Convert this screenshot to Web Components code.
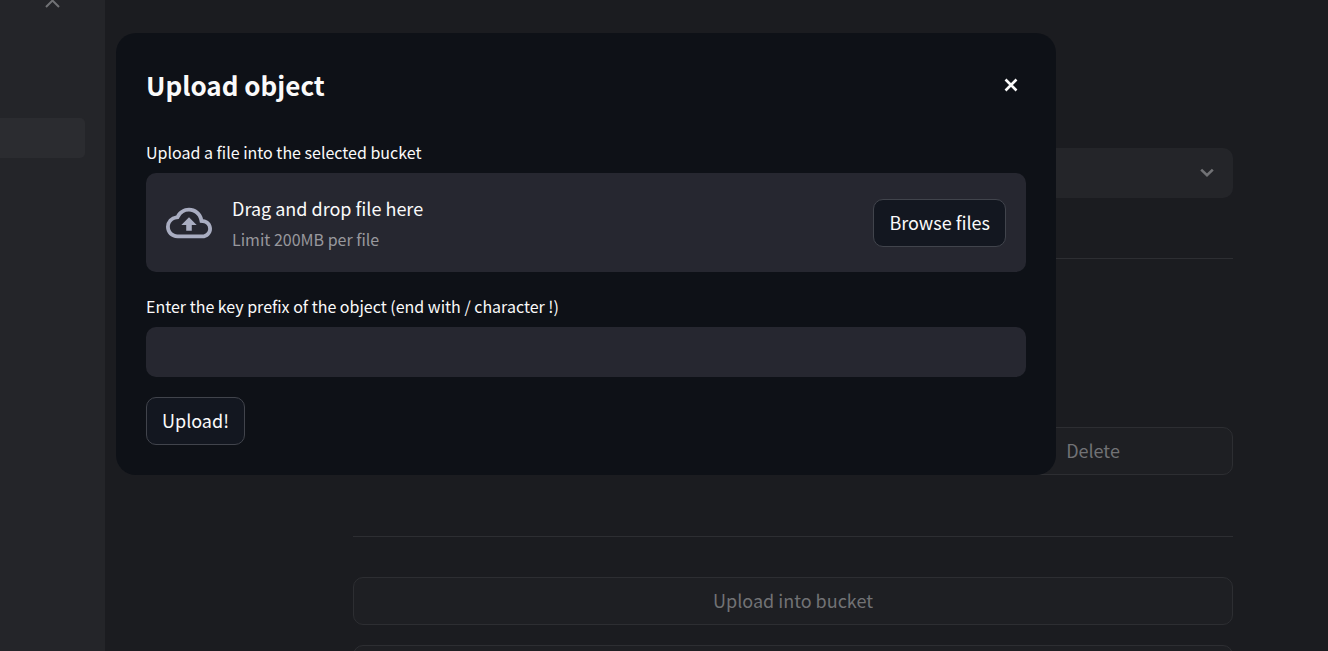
<!DOCTYPE html>
<html lang="en">
<head>
<meta charset="utf-8">
<meta name="viewport" content="width=device-width, initial-scale=1">
<title>Upload object</title>
<style>
  html, body { margin: 0; height: 100%; }
  body {
    overflow: hidden;
    background: #1b1c20;
    color: #fafafa;
    font: 18px/28px "Noto Sans CJK SC", "Noto Sans", sans-serif;
    --panel: #0e1117;
    --field: #262730;
    --button: #131720;
    --line: #41444c;
  }
</style>
</head>
<body>
<bucket-app></bucket-app>

<script>
const define = (name, html, setup) => {
  const template = document.createElement('template');
  template.innerHTML = html;
  customElements.define(name, class extends HTMLElement {
    constructor() {
      super();
      this.attachShadow({ mode: 'open' }).append(template.content.cloneNode(true));
      if (setup) setup(this, this.shadowRoot);
    }
  });
};

define('app-button', `
  <style>
    :host { display: block; }
    button {
      box-sizing: border-box; width: 100%; height: 48px; padding: 0 15px 2px;
      border: 1px solid var(--line); border-radius: 10px;
      background: var(--button); color: inherit; font: inherit;
      white-space: nowrap; cursor: pointer;
    }
  </style>
  <button type="button"><slot></slot></button>`);

define('app-sidebar', `
  <style>
    :host { display: block; width: 105px; flex: none; background: #242529; }
    .toggle {
      display: flex; justify-content: center; width: 100%; height: 118px;
      padding: 0; border: 0; background: none; color: #717275;
    }
    svg { display: block; }
    a { display: block; height: 40px; margin-right: 20px; border-radius: 0 5px 5px 0; background: #2b2c30; }
  </style>
  <button class="toggle" type="button" aria-label="Collapse section">
    <svg width="16" height="9" viewBox="0 0 16 9" fill="none" stroke="currentColor" stroke-width="2"><path d="M1 7 7.5 .5 14 7"/></svg>
  </button>
  <a href="#bucket" aria-label="Current page" aria-current="page"></a>`);

define('bucket-select', `
  <style>
    :host { display: grid; align-items: center; }
    select, svg { grid-area: 1 / 1; }
    select {
      appearance: none; width: 100%; height: 50px; padding: 0 50px 0 15px;
      border: 0; border-radius: 10px; background: #242529; color: inherit; font: inherit;
    }
    svg { justify-self: end; margin-right: 19px; pointer-events: none; }
  </style>
  <select aria-label="Bucket"><option></option></select>
  <svg width="14" height="10" viewBox="0 0 14 10" fill="none" stroke="currentColor" stroke-width="2.6"><path d="M1.2 1.6 7 7.3l5.8-5.7"/></svg>`);

define('bucket-page', `
  <style>
    :host {
      display: block; flex: 1; min-width: 0; padding: 148px 95px 0 248px; color: #717275;
      --button: #1e1f23; --line: #2d2e32;
    }
    hr { margin: 60px 0 40px; border: 0; border-top: 1px solid #2d2e32; }
    .actions {
      display: grid; grid-template-columns: repeat(3, 1fr); gap: 20px;
      min-height: 49px; padding-top: 128px;
    }
    .actions app-button { grid-column: 3; }
    .stack { display: grid; gap: 20px; }
  </style>
  <bucket-select></bucket-select>
  <hr>
  <div class="actions"><app-button>Delete</app-button></div>
  <hr>
  <div class="stack">
    <app-button>Upload into bucket</app-button>
    <app-button></app-button>
  </div>`);

define('file-drop', `
  <style>
    :host { display: block; }
    label { display: block; height: 24px; margin-bottom: 9px; font-size: 16px; line-height: 24px; }
    .zone {
      display: flex; align-items: center; gap: 20px; box-sizing: border-box;
      min-height: 99px; padding: 17px 20px; border-radius: 10px; background: var(--field);
    }
    svg { flex: none; color: #a9adc1; }
    .text { flex: 1; padding-top: 2px; }
    .text div { line-height: 31px; }
    .text .limit { font-size: 16px; color: #98989d; }
  </style>
  <label for="file">Upload a file into the selected bucket</label>
  <input id="file" type="file" hidden>
  <div class="zone">
    <svg width="46" height="46" viewBox="0 0 24 24" fill="currentColor" aria-hidden="true"><path d="M19.35 10.04A7.49 7.49 0 0 0 12 4C9.11 4 6.6 5.64 5.35 8.04A5.994 5.994 0 0 0 0 14c0 3.31 2.69 6 6 6h13c2.76 0 5-2.24 5-5 0-2.64-2.05-4.78-4.65-4.96zM19 18H6c-2.21 0-4-1.79-4-4 0-2.05 1.53-3.76 3.56-3.97l1.07-.11.5-.95A5.469 5.469 0 0 1 12 6c2.62 0 4.88 1.86 5.39 4.43l.3 1.5 1.53.11A2.98 2.98 0 0 1 22 15c0 1.65-1.35 3-3 3zM8 13h2.55v3h2.9v-3H16l-4-4z"/></svg>
    <div class="text">
      <div>Drag and drop file here</div>
      <div class="limit">Limit 200MB per file</div>
    </div>
    <app-button>Browse files</app-button>
  </div>`, (host, root) => {
  root.querySelector('app-button').addEventListener('click', () => root.getElementById('file').click());
});

define('text-field', `
  <style>
    :host { display: block; }
    label { display: block; height: 24px; margin-bottom: 9px; font-size: 16px; line-height: 24px; }
    input {
      display: block; box-sizing: border-box; width: 100%; height: 50px; padding: 0 15px;
      border: 0; border-radius: 10px; background: var(--field); color: inherit; font: inherit;
    }
  </style>
  <label for="text"><slot></slot></label>
  <input id="text" type="text">`);

define('app-dialog', `
  <style>
    :host {
      display: block; box-sizing: border-box; padding: 34px 30px 30px;
      border-radius: 20px; background: var(--panel);
    }
    header { display: flex; align-items: center; justify-content: space-between; margin-bottom: 37px; }
    h2 { margin: 0; font-size: 26px; line-height: 36px; font-weight: 600; }
    .close { padding: 8px; border: 0; background: none; color: inherit; cursor: pointer; }
    svg { display: block; }
  </style>
  <header>
    <h2><slot name="title"></slot></h2>
    <button class="close" type="button" aria-label="Close">
      <svg width="14" height="14" viewBox="0 0 14 14" fill="none" stroke="currentColor" stroke-width="2.6"><path d="m1.5 1.5 11 11m0-11-11 11"/></svg>
    </button>
  </header>
  <slot></slot>`, (host, root) => {
  root.querySelector('.close').addEventListener('click', () => host.remove());
});

define('bucket-app', `
  <style>
    :host { display: flex; position: relative; height: 100vh; overflow: hidden; }
    app-dialog { position: absolute; top: 33px; left: 116px; right: 272px; }
    text-field { margin: 22px 0 20px; }
    .submit { width: fit-content; }
  </style>
  <app-sidebar></app-sidebar>
  <bucket-page></bucket-page>
  <app-dialog role="dialog" aria-label="Upload object">
    <span slot="title">Upload object</span>
    <file-drop></file-drop>
    <text-field>Enter the key prefix of the object (end with / character !)</text-field>
    <app-button class="submit">Upload!</app-button>
  </app-dialog>`);
</script>
</body>
</html>
